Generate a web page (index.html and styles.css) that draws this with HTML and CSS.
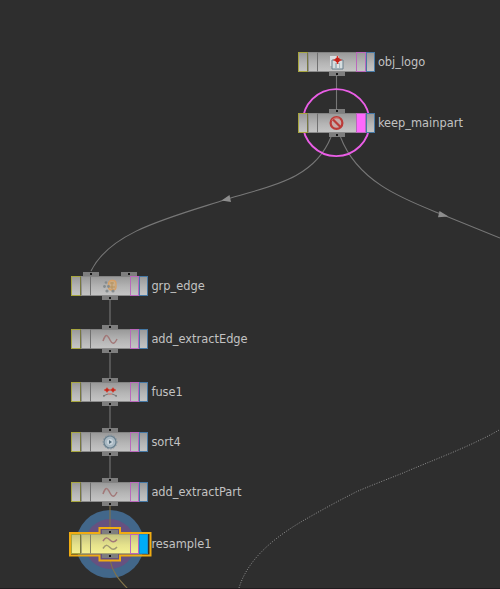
FILE: index.html
```html
<!DOCTYPE html>
<html lang="en">
<head>
<meta charset="utf-8">
<title>Node network</title>
<link rel="stylesheet" href="styles.css">
</head>
<body>
<main class="network">
  <svg class="wires" viewBox="0 0 500 589">
    <circle cx="110" cy="544" r="34" fill="#42678a"/>
    <circle cx="110" cy="544" r="25" fill="#665180"/>
    <g class="wire">
      <path d="M336.500 76V109M110 299V325M110 352V378M110 406V428M110 455V478"/>
      <path d="M331 137C313 182 264 187 226 199.500C168 218 110 232 91 271"/>
      <path d="M340.500 137C358 183 406 200 442 214.500L500 238"/>
    </g>
    <path class="wire-gold" d="M110 505V530M110 560C112 571 118 579 128 589"/>
    <path class="wire-dotted" d="M239 588C248 558 276 537 300 522.500C318 512 338 501 357 491.500C372 485 388 479 403 473C428 462 472 446 500 429.500"/>
    <path class="arrow" d="M221.500 200.500L229.500 195L231 202ZM439.500 211L448.500 216.500L438 217.300Z"/>
    <circle class="ring" cx="336.200" cy="122.600" r="33.500"/>
  </svg>

  <div class="node obj-logo">
    <div class="body"><i class="bypass"></i><i class="lock"></i><span class="face"><svg class="icon" viewBox="0 0 18 16"><path d="M2 2h9v10H2z" fill="#d8dde0"/><path d="M4 6h11v9H4z" fill="#d6dddf" stroke="#687f8c"/><path d="M7 9h5v5H7z" fill="#a9bbc2"/><path d="M9 14v-4h2v4" fill="#e4e4e4"/><path d="M9.500 2v8M5.500 6h8" stroke="#d93225" stroke-width="1.500"/><circle cx="9.500" cy="6" r="2.400" fill="#c72018"/></svg></span><i class="template"></i><i class="display"></i></div>
    <b class="port out"></b><span class="name">obj_logo</span>
  </div>

  <div class="node keep-mainpart">
    <b class="port in"></b>
    <div class="body"><i class="bypass"></i><i class="lock"></i><span class="face"><svg class="icon" viewBox="0 0 18 16"><circle cx="8.500" cy="8" r="5.900" fill="#c7aaa8" stroke="#bb3b38" stroke-width="2.200"/><path d="M4.500 4l8 8" stroke="#bb3b38" stroke-width="2.300"/><path d="M3.500 5.500Q7.500 1 11.500 3.500" fill="none" stroke="#dc8078" stroke-width=".7"/></svg></span><i class="template active"></i><i class="display"></i></div>
    <b class="port out"></b><span class="name">keep_mainpart</span>
  </div>

  <div class="node grp-edge">
    <b class="port in left"></b><b class="port in right"></b>
    <div class="body"><i class="bypass"></i><i class="lock"></i><span class="face"><svg class="icon" viewBox="0 0 18 16"><rect x="7.500" y="2.500" width="7.500" height="9.500" rx="3" fill="#c9ae8a" stroke="#d6a065" stroke-width="1.300"/><g fill="#858b8d"><circle cx="5" cy="4.500" r="1.300"/><circle cx="3.500" cy="8.500" r="1.400"/><circle cx="6" cy="13" r="1.600"/><circle cx="12" cy="13" r="1.600"/><circle cx="7.500" cy="8.500" r="1.400"/></g><path d="M9 5h4M11 4v7M9 9h5" stroke="#b5925f"/></svg></span><i class="template"></i><i class="display"></i></div>
    <b class="port out"></b><span class="name">grp_edge</span>
  </div>

  <div class="node extract-edge">
    <b class="port in"></b>
    <div class="body"><i class="bypass"></i><i class="lock"></i><span class="face"><svg class="icon" viewBox="0 0 18 16"><path class="curve" d="M2 10C5 1 7 5 9 9S13 14 16 8"/></svg></span><i class="template"></i><i class="display"></i></div>
    <b class="port out"></b><span class="name">add_extractEdge</span>
  </div>

  <div class="node fuse">
    <b class="port in"></b>
    <div class="body"><i class="bypass"></i><i class="lock"></i><span class="face"><svg class="icon" viewBox="0 0 18 16"><path d="M3 6h12M6 3.500v5M12 3.500v5" stroke="#d45446" stroke-width="1.300"/><circle cx="6" cy="6" r="1.800" fill="#c9281c"/><circle cx="12" cy="6" r="1.800" fill="#c9281c"/><path d="M2 12l5-2M11 10l5 2M3 11v2M15 11v2" fill="none" stroke="#777"/><path d="M7 10h4" stroke="#d06959"/></svg></span><i class="template"></i><i class="display"></i></div>
    <b class="port out"></b><span class="name">fuse1</span>
  </div>

  <div class="node sort">
    <b class="port in"></b>
    <div class="body"><i class="bypass"></i><i class="lock"></i><span class="face"><svg class="icon" viewBox="0 0 18 16"><circle cx="9" cy="8" r="6" fill="#a9b9c3" stroke="#697f8d" stroke-width="1.200"/><circle cx="9" cy="8" r="6.900" fill="none" stroke="#7c909d" stroke-dasharray="1.500 1.500"/><circle cx="9" cy="8" r="3" fill="#c8d3da"/><path d="M8 6l3 2-3 2z" fill="#526b7b"/></svg></span><i class="template"></i><i class="display"></i></div>
    <b class="port out"></b><span class="name">sort4</span>
  </div>

  <div class="node extract-part">
    <b class="port in"></b>
    <div class="body"><i class="bypass"></i><i class="lock"></i><span class="face"><svg class="icon" viewBox="0 0 18 16"><path class="curve" d="M2 10C5 1 7 5 9 9S13 14 16 8"/></svg></span><i class="template"></i><i class="display"></i></div>
    <b class="port out"></b><span class="name">add_extractPart</span>
  </div>

  <div class="node resample selected">
    <svg class="outline" viewBox="0 0 86 38"><path d="M3 8H32.500V3H53V8H83.500V30.500H53V35.500H32.500V30.500H3Z"/></svg>
    <b class="port in"></b>
    <div class="body"><i class="bypass"></i><i class="lock"></i><span class="face"><svg class="icon" viewBox="0 0 18 16"><path class="curve" d="M2 5C5 0 7 2 9 4S13 7 16 3.500"/><path d="M2 12.500C5 7.500 7 9.500 9 11.500S13 14.500 16 11" fill="none" stroke="#a09972" stroke-width="1.500"/></svg></span><i class="template"></i><i class="display active"></i></div>
    <b class="port out"></b><span class="name">resample1</span>
  </div>
</main>
</body>
</html>
```
FILE: styles.css
```css
body {
  margin: 0;
  background: #2e2e2e;
}

.network {
  position: relative;
  box-sizing: border-box;
  width: 500px;
  height: 589px;
  overflow: hidden;
  border-bottom: 1px solid #201c1f;
  font: 11.4px "DejaVu Sans", sans-serif;
  color: #c2c2c2;
}

.wires {
  position: absolute;
  top: 0;
  left: 0;
  width: 500px;
  height: 589px;
}

.wire {
  fill: none;
  stroke: #777;
  stroke-width: 1.1;
}

.wire-gold {
  fill: none;
  stroke: #817249;
  stroke-width: 1.1;
}

.wire-dotted {
  fill: none;
  stroke: #909090;
  stroke-dasharray: 1 1.5;
}

.arrow {
  fill: #8d8d8d;
}

.ring {
  fill: none;
  stroke: #ea5ee6;
  stroke-width: 1.9;
}

/* Nodes sit at their own places on the free canvas. */
.node {
  position: absolute;
  left: 71px;
  display: flex;
  align-items: center;
  gap: 3.4px;
  height: 20px;
}

.obj-logo { left: 297.500px; top: 52px; }
.keep-mainpart { left: 297.500px; top: 113px; }
.grp-edge { top: 276px; }
.extract-edge { top: 329px; }
.fuse { top: 382px; }
.sort { top: 432px; }
.extract-part { top: 482px; }
.resample { top: 534px; }

.body {
  display: grid;
  grid-template-columns: 10px 10px 38.500px 9.500px 1fr;
  width: 77px;
  height: 20px;
  background: linear-gradient(#979797, #b5b5b5 55%, #c6c6c6);
}

.body i {
  box-sizing: border-box;
  border: 1px solid #888;
}

.body .bypass { border-color: #a7a63f #77773f #a7a63f #a7a63f; }
.body .lock { border-color: #8b8b8b #707070 #8b8b8b #929292; }
.body .template { border-color: #ba68bc; }
.body .display { border-color: #4779a5; }
.keep-mainpart .template.active { background: #ff68fc; }

.face {
  display: flex;
  align-items: center;
  justify-content: center;
  box-sizing: border-box;
  border-top: 1px solid #838383;
  border-bottom: 1px solid #8b8b8b;
}

.icon {
  display: block;
  width: 18px;
  height: 16px;
}

.curve {
  fill: none;
  stroke: #a27878;
  stroke-width: 1.5;
}

.port {
  position: absolute;
  left: 31px;
  box-sizing: border-box;
  width: 16px;
  height: 4px;
  background: radial-gradient(circle at 50% 50%, #181818 0.8px, transparent 1.5px), #7e7e7e;
}

.in { top: -4px; }
.out { bottom: -4px; }
.port.left { left: 11.500px; }
.port.right { left: 50px; }

.name {
  line-height: 20px;
  margin-top: -1px;
  white-space: nowrap;
}

.outline {
  position: absolute;
  left: -4px;
  top: -9px;
  width: 86px;
  height: 38px;
}

.outline path {
  fill: none;
  stroke: #f0ac12;
  stroke-width: 2;
}

.selected .body {
  background: linear-gradient(#c2c080, #e5e28c 55%, #f5f294);
}

.selected .body .lock { border-color: #aaa875 #858466 #aaa875 #aaa875; }

.selected .face {
  border-color: #aaa875;
}

.selected .body .display.active {
  background: #00acf5;
  border-color: #1292cf;
}
```
